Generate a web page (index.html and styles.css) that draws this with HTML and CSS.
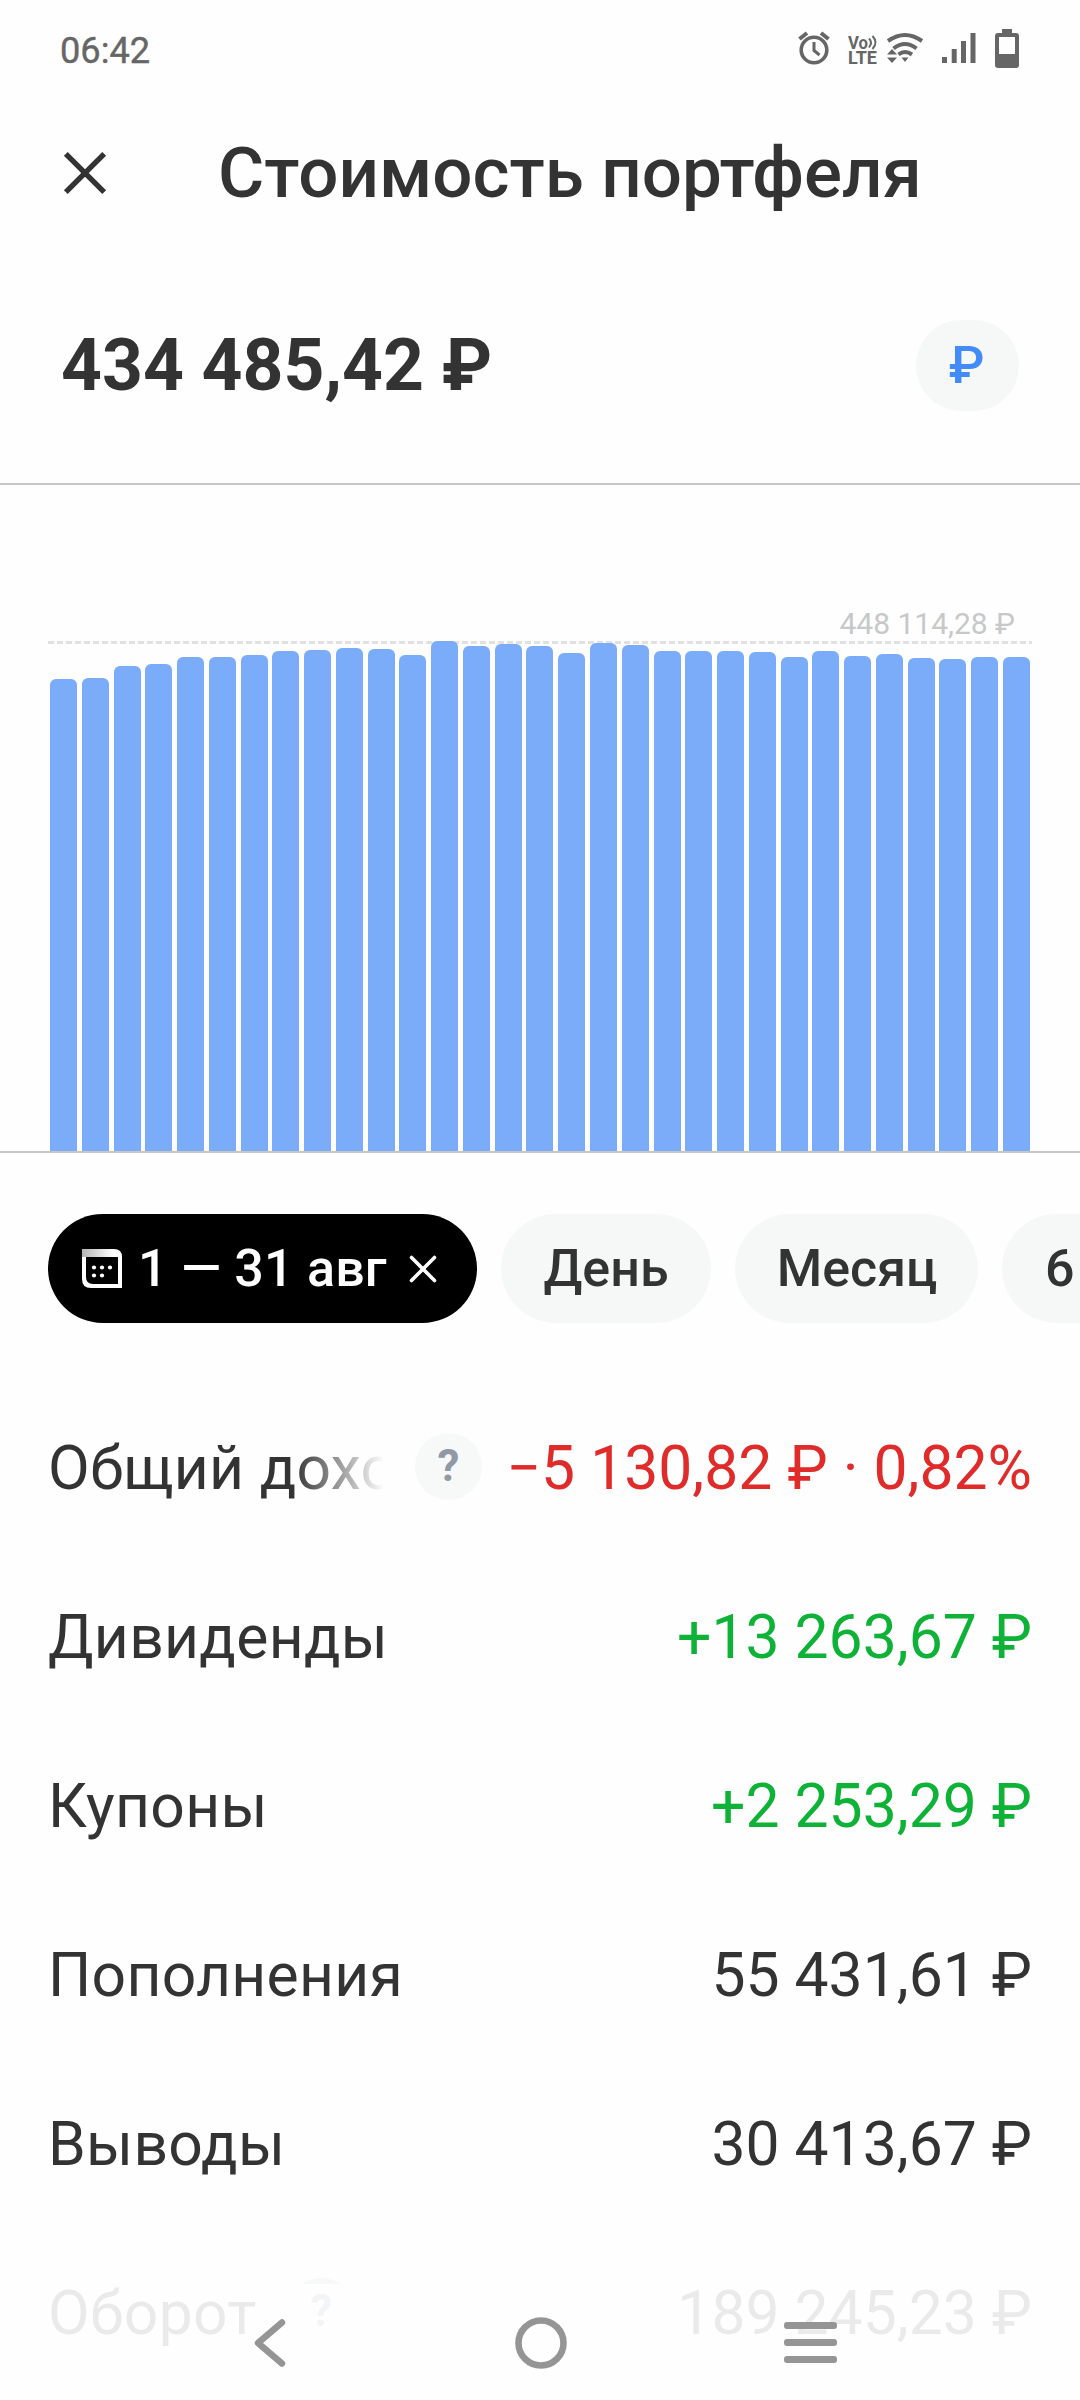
FILE: index.html
```html
<!DOCTYPE html>
<html lang="ru">
<head>
<meta charset="utf-8">
<title>Стоимость портфеля</title>
<link rel="stylesheet" href="styles.css">
</head>
<body>
<div class="screen">
  <div class="status">
    <span class="time">06:42</span>
    <div class="status-icons">
      <svg class="alarm" width="32" height="34" viewBox="0 0 32 34" fill="none" stroke="#666" stroke-width="3.6"><circle cx="16" cy="19" r="12.8"/><path d="M1.5 8 9 2M30.500 8 23 2" stroke-width="4"/><path d="M16 11v8.500l5.500 4.500" stroke-width="3"/></svg>
      <svg class="volte" width="30" height="30" viewBox="0 0 30 30" fill="#666"><text class="lte" x="0" y="13.500" textLength="20" lengthAdjust="spacingAndGlyphs">Vo</text><text class="lte" x="0" y="29" textLength="29" lengthAdjust="spacingAndGlyphs">LTE</text><g fill="none" stroke="#666" stroke-width="2"><path d="M21 3.500q4 4 0 9M24.500 1q6 6.500 0 13"/></g></svg>
      <svg class="wifi" width="36" height="30" viewBox="0 0 36 30" fill="none" stroke="#666" stroke-width="4"><path d="M1 8Q18-4 35 8M6.500 15.500Q18 6.500 29.500 15.500M11.500 21.500Q18 16.500 25 21.500"/><path d="M0 21.500 5 16l5 5.500zM0 24.500h10l-5 5.500zM14.500 24.500h7L18 29z" fill="#666" stroke="none"/></svg>
      <svg class="signal" width="34" height="30" viewBox="0 0 34 30" fill="#666"><path d="M0 24h5v6H0zM9.700 16h5v14h-5zM19 8h5v22h-5zM28.500 0h5v30h-5z"/></svg>
      <svg class="battery" width="24" height="39" viewBox="0 0 24 39" fill="#666"><path fill-rule="evenodd" d="M7 0h10v4h4q3 0 3 3v29q0 3-3 3H3q-3 0-3-3V7q0-3 3-3h4zM4 8v17h16V8z"/></svg>
    </div>
  </div>
  <header class="header">
    <svg class="close" width="42" height="42" viewBox="0 0 42 42" stroke="#333" stroke-width="5.4"><path d="M1.800 1.800 40.200 40.200M40.200 1.800 1.800 40.200"/></svg>
    <h1 class="title">Стоимость портфеля</h1>
  </header>
  <section class="total">
    <span class="amount">434 485,42 ₽</span>
    <span class="currency">₽</span>
  </section>
  <section class="chart">
    <div class="max">448 114,28 ₽</div>
    <svg class="guide" width="984" height="3" viewBox="0 0 984 3"><path d="M0 1.500H984" stroke="#e1e1e1" stroke-width="3" stroke-dasharray="6 3"/></svg>
    <div class="bars">
      <i style="height:472px"></i><i style="height:473px"></i><i style="height:485px"></i><i style="height:487px"></i><i style="height:494px"></i><i style="height:494px"></i><i style="height:496px"></i><i style="height:500px"></i><i style="height:501px"></i><i style="height:503px"></i><i style="height:502px"></i><i style="height:496px"></i><i style="height:510px"></i><i style="height:505px"></i><i style="height:507px"></i><i style="height:505px"></i><i style="height:498px"></i><i style="height:508px"></i><i style="height:506px"></i><i style="height:500.500px"></i><i style="height:500px"></i><i style="height:500px"></i><i style="height:499px"></i><i style="height:494px"></i><i style="height:500px"></i><i style="height:495.500px"></i><i style="height:497px"></i><i style="height:493px"></i><i style="height:492.500px"></i><i style="height:494.500px"></i><i style="height:494px"></i>
    </div>
  </section>
  <nav class="chips">
    <div class="chip active">
      <svg class="cal" width="40" height="39" viewBox="0 0 40 39"><defs><linearGradient id="fold"><stop offset="0" stop-color="#b5b5b5"/><stop offset=".8" stop-color="#fff"/></linearGradient></defs><path fill="#fff" fill-rule="evenodd" d="M0 7h40v32H9q-9 0-9-9zM4 8v20q0 7 7 7h25V8z"/><path fill="url(#fold)" d="M0 0h32q8 0 8 8H0z"/><g fill="#fff"><circle cx="12" cy="18.500" r="2.100"/><circle cx="20" cy="18.500" r="2.100"/><circle cx="28" cy="18.500" r="2.100"/><circle cx="12" cy="26.500" r="2.100"/><circle cx="20" cy="26.500" r="2.100"/></g></svg>
      <span class="range">1 — 31 авг</span>
      <svg class="clear" width="28" height="28" viewBox="0 0 28 28" stroke="#fff" stroke-width="3.600" stroke-linecap="round"><path d="M2.500 2.500 25.500 25.500M25.500 2.500 2.500 25.500"/></svg>
    </div>
    <div class="chip day">День</div>
    <div class="chip month">Месяц</div>
    <div class="chip half">6</div>
  </nav>
  <main class="rows">
    <div class="row"><span class="label fade">Общий доход</span><span class="help">?</span><span class="value red">−5 130,82 ₽ · 0,82%</span></div>
    <div class="row"><span class="label">Дивиденды</span><span class="value green">+13 263,67 ₽</span></div>
    <div class="row"><span class="label">Купоны</span><span class="value green">+2 253,29 ₽</span></div>
    <div class="row"><span class="label">Пополнения</span><span class="value">55 431,61 ₽</span></div>
    <div class="row"><span class="label">Выводы</span><span class="value">30 413,67 ₽</span></div>
    <div class="row"><span class="label">Оборот</span><span class="help">?</span><span class="value">189 245,23 ₽</span></div>
  </main>
  <div class="navbar">
    <svg width="32" height="48" viewBox="0 0 32 48" fill="none" stroke="#959595" stroke-width="6.500" stroke-linecap="round" stroke-linejoin="round"><path d="M28 3.500 4 24 28 44.500"/></svg>
    <svg class="home" width="52" height="52" viewBox="0 0 52 52" fill="none" stroke="#959595" stroke-width="6.600"><circle cx="26" cy="26" r="22.500"/></svg>
    <svg width="53" height="41" viewBox="0 0 53 41" fill="#959595"><rect width="53" height="7" rx="3"/><rect y="17" width="53" height="7" rx="3"/><rect y="34" width="53" height="7" rx="3"/></svg>
  </div>
</div>
</body>
</html>
```
FILE: styles.css
```css
* { box-sizing: border-box; }
body { margin: 0; background: #fefefe; color: #333; font-family: Roboto, "Noto Sans", sans-serif; }
svg { display: block; flex: none; overflow: visible; }
.screen { position: relative; width: 1080px; height: 2400px; overflow: hidden; display: flex; flex-direction: column; }

.status { height: 100px; flex: none; display: flex; justify-content: space-between; padding: 0 61px 0 60px; }
.time { font-size: 36.2px; line-height: 44px; margin-top: 29px; color: #666; -webkit-text-stroke: .4px #666; }
.status-icons { display: flex; align-items: flex-start; }
.alarm { margin: 31px 18px 0 0; }
.volte { margin: 35px 9px 0 0; }
.wifi { margin: 33px 19px 0 0; }
.signal { margin: 33px 19px 0 0; }
.battery { margin-top: 29px; }
.lte { font: 700 18px Roboto, sans-serif; }

.header { height: 160px; flex: none; display: flex; align-items: flex-start; padding-left: 64px; }
.close { margin-top: 52px; }
.title { margin: 32px 0 0 112px; font-size: 70.9px; line-height: 82px; font-weight: 500; white-space: nowrap; }

.total { height: 225px; flex: none; display: flex; justify-content: space-between; align-items: flex-start; padding: 60px 61px 0 61px; border-bottom: 2px solid #c6c6c6; }
.amount { font-size: 71.4px; line-height: 84px; font-weight: 700; margin-top: 4px; white-space: nowrap; }
.currency { width: 103px; height: 91px; border-radius: 46px; background: #f6f8f8; color: #428bf9; font-size: 52px; line-height: 91px; font-weight: 500; text-align: center; padding-right: 2px; }

.chart { height: 668px; flex: none; border-bottom: 2px solid #c6c6c6; padding: 119px 48px 0; display: flex; flex-direction: column; }
.max { align-self: flex-end; margin-right: 17px; font-size: 30px; line-height: 36px; height: 37px; padding-top: 2px; color: #c6c8ca; }
.guide { height: 3px; }
.bars { display: grid; grid-template-columns: repeat(31, 27px); justify-content: space-between; align-items: end; height: 510px; margin: -3px 2px 0; flex: none; }
.bars i { background: #7aacf9; border-radius: 6px 6px 0 0; }

.chips { display: flex; gap: 24px; padding-left: 48px; margin-top: 61px; height: 109px; flex: none; }
.chip { flex: none; height: 109px; border-radius: 55px; background: #f6f8f8; font-size: 52px; line-height: 109px; font-weight: 500; text-align: center; white-space: nowrap; }
.active { width: 429px; background: #000; color: #fff; display: flex; align-items: center; padding-left: 34px; }
.range { margin-left: 16px; letter-spacing: .2px; }
.clear { margin-left: 22px; margin-top: 1px; }
.day { width: 210px; }
.month { width: 243px; padding-left: 1px; }
.half { width: 180px; text-align: left; padding-left: 43px; }

.rows { margin-top: 61px; padding: 0 48px; }
.row { height: 169px; display: flex; align-items: center; font-size: 60.6px; line-height: 70px; white-space: nowrap; }
.label { letter-spacing: .3px; }
.fade { width: 336px; overflow: hidden; -webkit-mask-image: linear-gradient(90deg, #000 245px, transparent 336px); mask-image: linear-gradient(90deg, #000 245px, transparent 336px); }
.help { width: 67px; height: 67px; border-radius: 50%; margin-left: 31px; margin-top: -5px; background: #f7f9f9; color: #9299a6; font-size: 44px; line-height: 67px; font-weight: 700; text-align: center; flex: none; }
.value { margin-left: auto; }
.red { color: #e02b2b; }
.green { color: #0db237; }

.navbar { position: absolute; left: 0; right: 0; bottom: 0; height: 116px; background: rgba(254, 254, 254, .9); display: flex; justify-content: space-between; align-items: center; padding: 1px 243px 0 254px; }
.home { margin-left: 11px; }
```
